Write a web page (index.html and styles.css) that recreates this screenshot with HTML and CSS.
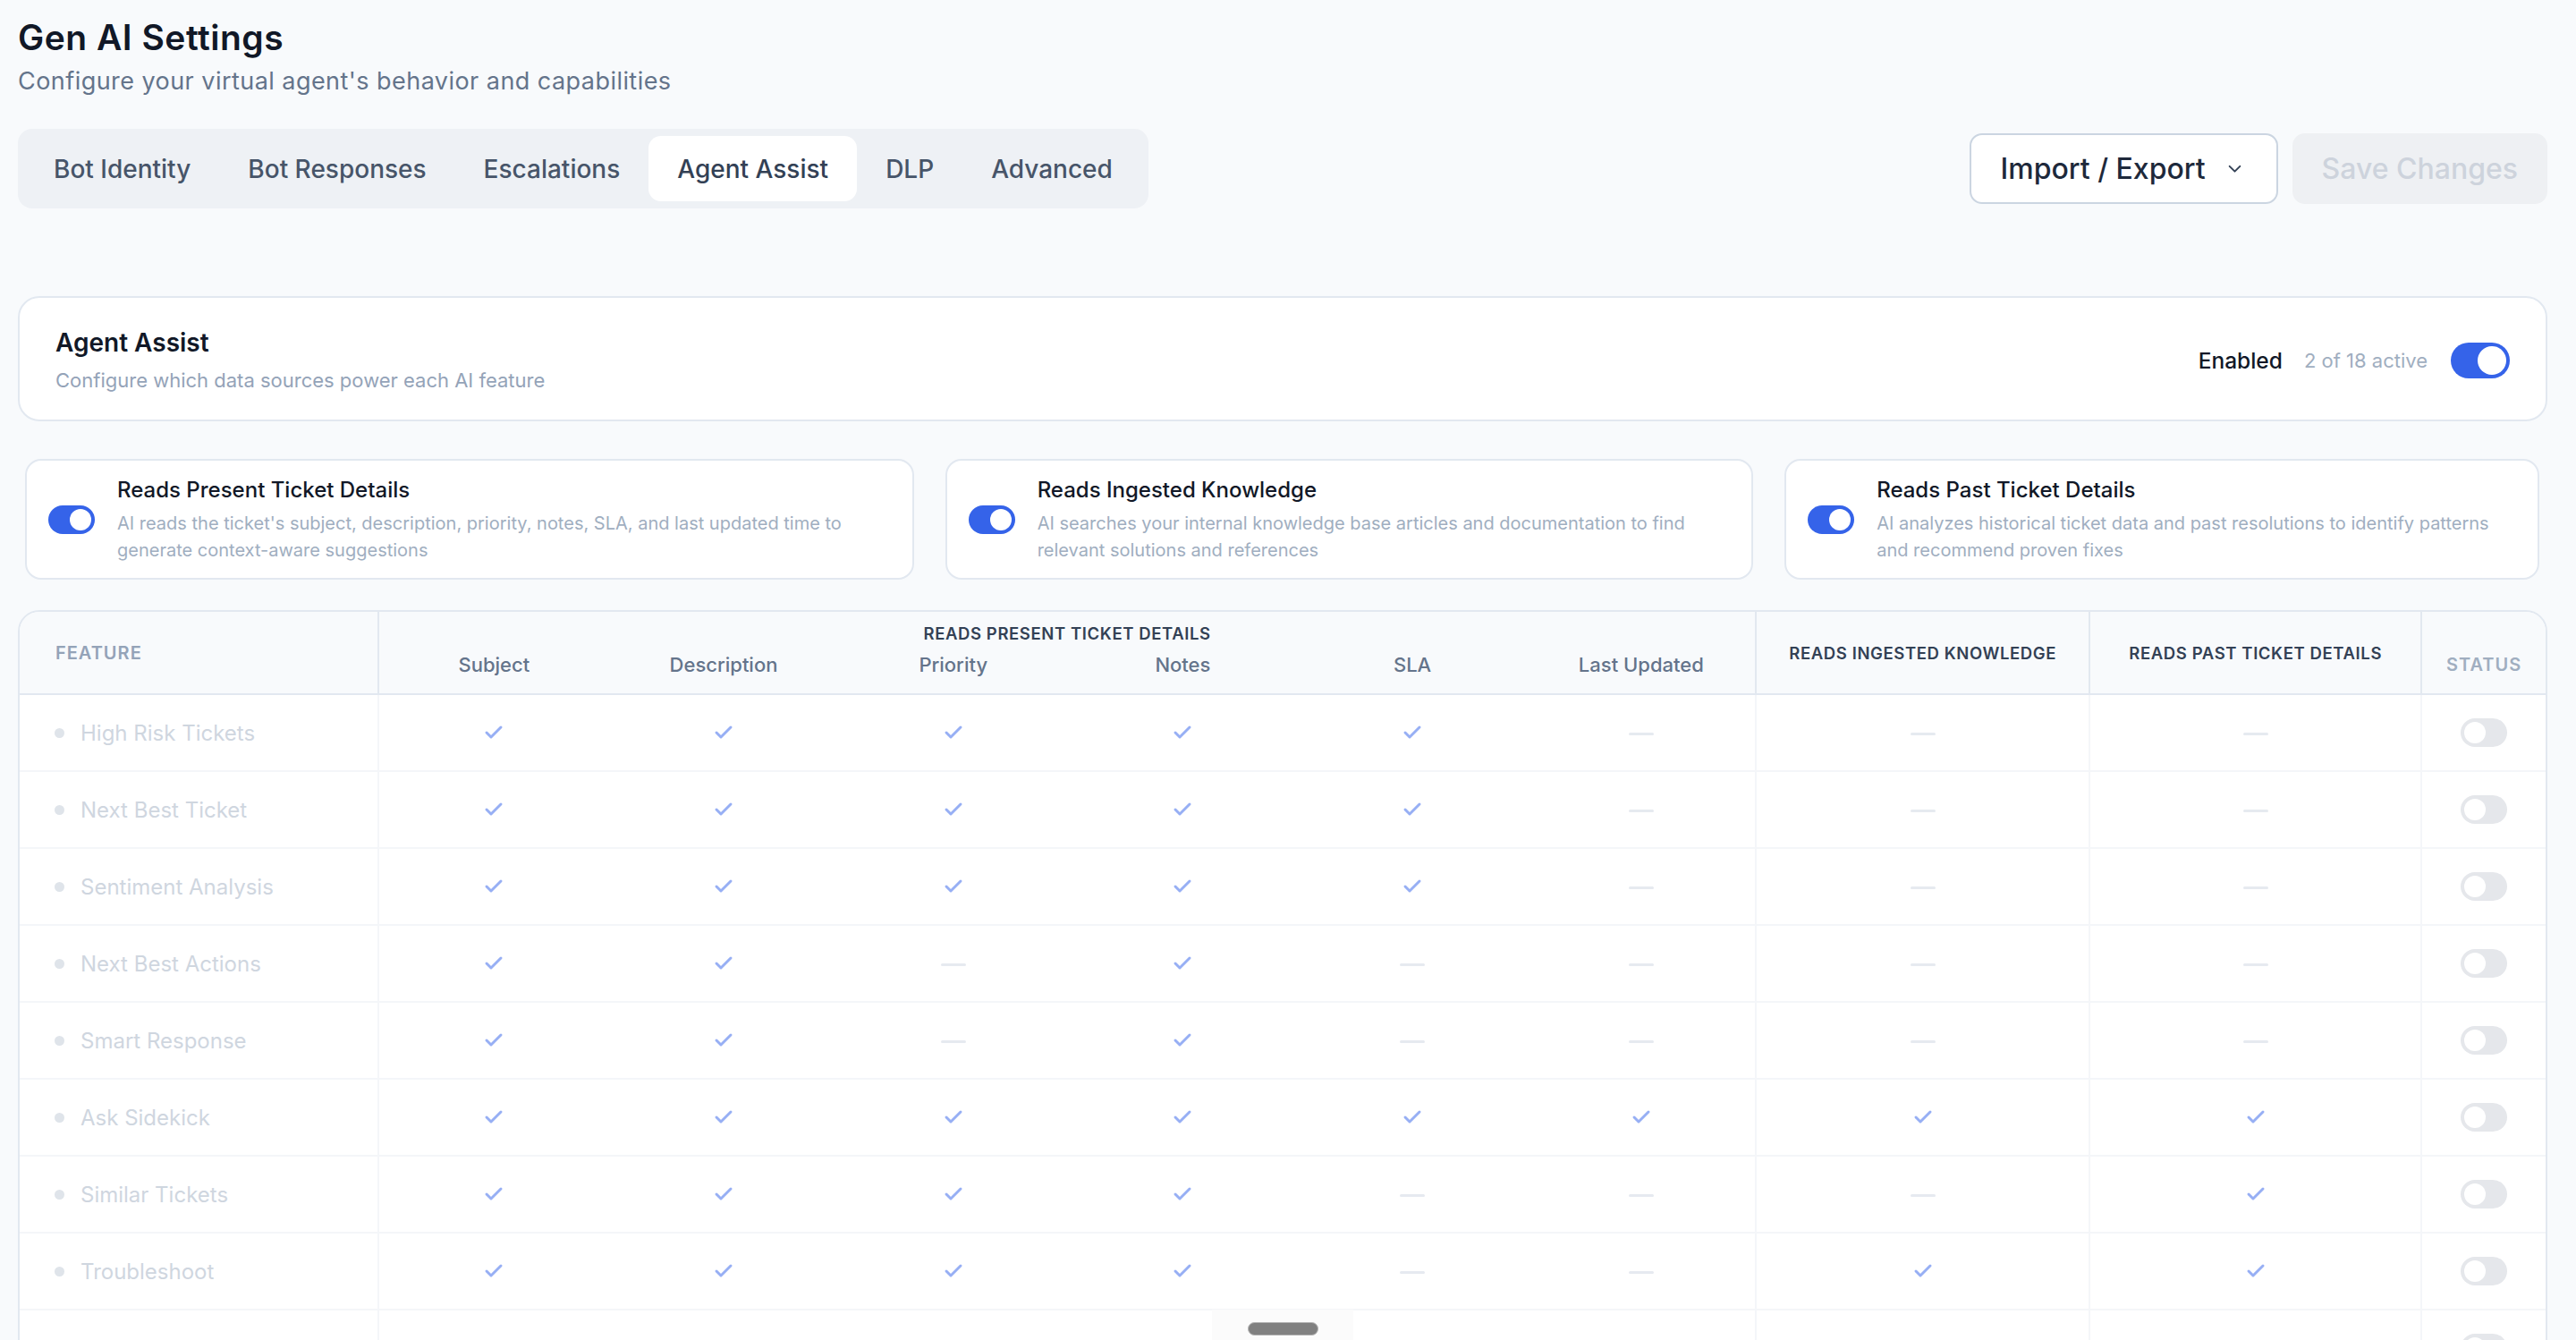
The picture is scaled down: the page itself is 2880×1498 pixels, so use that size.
FILE: index.html
```html
<!DOCTYPE html>
<html lang="en">
<head>
<meta charset="utf-8">
<title>Gen AI Settings</title>
<link rel="stylesheet" href="styles.css">
</head>
<body>
<svg class="defs" width="0" height="0" aria-hidden="true">
  <symbol id="ic-check" viewBox="0 0 24 24">
    <path d="M4 12l5 5L20 6" fill="none" stroke="currentColor" stroke-width="3" stroke-linecap="round" stroke-linejoin="round"/>
  </symbol>
</svg>

<main class="page">
  <header class="page-head">
    <h1 class="page-title">Gen AI Settings</h1>
    <p class="page-subtitle">Configure your virtual agent's behavior and capabilities</p>
  </header>

  <div class="toolbar">
    <nav class="tabs">
      <button class="tab">Bot Identity</button>
      <button class="tab">Bot Responses</button>
      <button class="tab">Escalations</button>
      <button class="tab tab-active">Agent Assist</button>
      <button class="tab">DLP</button>
      <button class="tab">Advanced</button>
    </nav>
    <div class="actions">
      <button class="btn btn-outline">Import / Export
        <svg class="chev" viewBox="0 0 16 16" width="16" height="16"><path d="M2.5 5.5l5.5 5.5 5.5-5.5" fill="none" stroke="currentColor" stroke-width="1.8" stroke-linecap="round" stroke-linejoin="round"/></svg>
      </button>
      <button class="btn btn-disabled" disabled>Save Changes</button>
    </div>
  </div>

  <section class="panel panel-head">
    <div class="panel-text">
      <h2 class="panel-title">Agent Assist</h2>
      <p class="panel-desc">Configure which data sources power each AI feature</p>
    </div>
    <div class="panel-state">
      <span class="state-label">Enabled</span>
      <span class="state-count">2 of 18 active</span>
      <span class="switch switch-lg is-on"></span>
    </div>
  </section>

  <div class="sources">
    <div class="source">
      <span class="switch is-on"></span>
      <div class="source-text">
        <div class="source-title">Reads Present Ticket Details</div>
        <div class="source-desc">AI reads the ticket's subject, description, priority, notes, SLA, and last updated time to generate context-aware suggestions</div>
      </div>
    </div>
    <div class="source">
      <span class="switch is-on"></span>
      <div class="source-text">
        <div class="source-title">Reads Ingested Knowledge</div>
        <div class="source-desc">AI searches your internal knowledge base articles and documentation to find relevant solutions and references</div>
      </div>
    </div>
    <div class="source">
      <span class="switch is-on"></span>
      <div class="source-text">
        <div class="source-title">Reads Past Ticket Details</div>
        <div class="source-desc">AI analyzes historical ticket data and past resolutions to identify patterns and recommend proven fixes</div>
      </div>
    </div>
  </div>

  <div class="matrix">
    <table>
      <colgroup>
        <col class="c-feature">
        <col class="c-sub"><col class="c-sub"><col class="c-sub"><col class="c-sub"><col class="c-sub"><col class="c-sub">
        <col class="c-ingested">
        <col class="c-past">
        <col class="c-status">
      </colgroup>
      <thead>
        <tr class="head-top">
          <th class="h-feature sep" rowspan="2">Feature</th>
          <th class="h-group sep" colspan="6">Reads Present Ticket Details</th>
          <th class="h-group h-mid sep" rowspan="2">Reads Ingested Knowledge</th>
          <th class="h-group h-mid sep" rowspan="2">Reads Past Ticket Details</th>
          <th class="h-status" rowspan="2">Status</th>
        </tr>
        <tr class="head-sub">
          <th>Subject</th>
          <th>Description</th>
          <th>Priority</th>
          <th>Notes</th>
          <th>SLA</th>
          <th class="sep">Last Updated</th>
        </tr>
      </thead>
      <tbody>
        <tr>
          <td class="name sep"><span class="dot"></span>High Risk Tickets</td>
          <td><svg class="chk"><use href="#ic-check"/></svg></td>
          <td><svg class="chk"><use href="#ic-check"/></svg></td>
          <td><svg class="chk"><use href="#ic-check"/></svg></td>
          <td><svg class="chk"><use href="#ic-check"/></svg></td>
          <td><svg class="chk"><use href="#ic-check"/></svg></td>
          <td class="sep"><span class="dash"></span></td>
          <td class="sep"><span class="dash"></span></td>
          <td class="sep"><span class="dash"></span></td>
          <td><span class="switch"></span></td>
        </tr>
        <tr>
          <td class="name sep"><span class="dot"></span>Next Best Ticket</td>
          <td><svg class="chk"><use href="#ic-check"/></svg></td>
          <td><svg class="chk"><use href="#ic-check"/></svg></td>
          <td><svg class="chk"><use href="#ic-check"/></svg></td>
          <td><svg class="chk"><use href="#ic-check"/></svg></td>
          <td><svg class="chk"><use href="#ic-check"/></svg></td>
          <td class="sep"><span class="dash"></span></td>
          <td class="sep"><span class="dash"></span></td>
          <td class="sep"><span class="dash"></span></td>
          <td><span class="switch"></span></td>
        </tr>
        <tr>
          <td class="name sep"><span class="dot"></span>Sentiment Analysis</td>
          <td><svg class="chk"><use href="#ic-check"/></svg></td>
          <td><svg class="chk"><use href="#ic-check"/></svg></td>
          <td><svg class="chk"><use href="#ic-check"/></svg></td>
          <td><svg class="chk"><use href="#ic-check"/></svg></td>
          <td><svg class="chk"><use href="#ic-check"/></svg></td>
          <td class="sep"><span class="dash"></span></td>
          <td class="sep"><span class="dash"></span></td>
          <td class="sep"><span class="dash"></span></td>
          <td><span class="switch"></span></td>
        </tr>
        <tr>
          <td class="name sep"><span class="dot"></span>Next Best Actions</td>
          <td><svg class="chk"><use href="#ic-check"/></svg></td>
          <td><svg class="chk"><use href="#ic-check"/></svg></td>
          <td><span class="dash"></span></td>
          <td><svg class="chk"><use href="#ic-check"/></svg></td>
          <td><span class="dash"></span></td>
          <td class="sep"><span class="dash"></span></td>
          <td class="sep"><span class="dash"></span></td>
          <td class="sep"><span class="dash"></span></td>
          <td><span class="switch"></span></td>
        </tr>
        <tr>
          <td class="name sep"><span class="dot"></span>Smart Response</td>
          <td><svg class="chk"><use href="#ic-check"/></svg></td>
          <td><svg class="chk"><use href="#ic-check"/></svg></td>
          <td><span class="dash"></span></td>
          <td><svg class="chk"><use href="#ic-check"/></svg></td>
          <td><span class="dash"></span></td>
          <td class="sep"><span class="dash"></span></td>
          <td class="sep"><span class="dash"></span></td>
          <td class="sep"><span class="dash"></span></td>
          <td><span class="switch"></span></td>
        </tr>
        <tr>
          <td class="name sep"><span class="dot"></span>Ask Sidekick</td>
          <td><svg class="chk"><use href="#ic-check"/></svg></td>
          <td><svg class="chk"><use href="#ic-check"/></svg></td>
          <td><svg class="chk"><use href="#ic-check"/></svg></td>
          <td><svg class="chk"><use href="#ic-check"/></svg></td>
          <td><svg class="chk"><use href="#ic-check"/></svg></td>
          <td class="sep"><svg class="chk"><use href="#ic-check"/></svg></td>
          <td class="sep"><svg class="chk"><use href="#ic-check"/></svg></td>
          <td class="sep"><svg class="chk"><use href="#ic-check"/></svg></td>
          <td><span class="switch"></span></td>
        </tr>
        <tr>
          <td class="name sep"><span class="dot"></span>Similar Tickets</td>
          <td><svg class="chk"><use href="#ic-check"/></svg></td>
          <td><svg class="chk"><use href="#ic-check"/></svg></td>
          <td><svg class="chk"><use href="#ic-check"/></svg></td>
          <td><svg class="chk"><use href="#ic-check"/></svg></td>
          <td><span class="dash"></span></td>
          <td class="sep"><span class="dash"></span></td>
          <td class="sep"><span class="dash"></span></td>
          <td class="sep"><svg class="chk"><use href="#ic-check"/></svg></td>
          <td><span class="switch"></span></td>
        </tr>
        <tr>
          <td class="name sep"><span class="dot"></span>Troubleshoot</td>
          <td><svg class="chk"><use href="#ic-check"/></svg></td>
          <td><svg class="chk"><use href="#ic-check"/></svg></td>
          <td><svg class="chk"><use href="#ic-check"/></svg></td>
          <td><svg class="chk"><use href="#ic-check"/></svg></td>
          <td><span class="dash"></span></td>
          <td class="sep"><span class="dash"></span></td>
          <td class="sep"><svg class="chk"><use href="#ic-check"/></svg></td>
          <td class="sep"><svg class="chk"><use href="#ic-check"/></svg></td>
          <td><span class="switch"></span></td>
        </tr>
        <tr>
          <td class="name sep"><span class="dot"></span>Case Summary</td>
          <td><svg class="chk"><use href="#ic-check"/></svg></td>
          <td><svg class="chk"><use href="#ic-check"/></svg></td>
          <td><svg class="chk"><use href="#ic-check"/></svg></td>
          <td><svg class="chk"><use href="#ic-check"/></svg></td>
          <td><span class="dash"></span></td>
          <td class="sep"><span class="dash"></span></td>
          <td class="sep"><span class="dash"></span></td>
          <td class="sep"><span class="dash"></span></td>
          <td><span class="switch"></span></td>
        </tr>
      </tbody>
    </table>
  </div>
</main>

<div class="scroll-handle"><span class="scroll-thumb"></span></div>
</body>
</html>
```

FILE: styles.css
```css
* { box-sizing: border-box; }

html, body { margin: 0; }

body {
  background: #f8fafc;
  font-family: Inter, "Noto Sans", "Liberation Sans", sans-serif;
  color: #111827;
  overflow: hidden;
}

.defs { position: absolute; }

.page { padding: 20px 32px 0 20px; }

/* Heading */
.page-title {
  margin: 0;
  font-size: 39px;
  line-height: 44px;
  font-weight: 600;
  letter-spacing: 0.5px;
  color: #111827;
}
.page-subtitle {
  margin: 9px 0 0;
  font-size: 27px;
  line-height: 36px;
  letter-spacing: 0.45px;
  color: #64748b;
}

/* Tabs + actions */
.toolbar {
  margin-top: 35px;
  display: flex;
  align-items: center;
  justify-content: space-between;
}
.tabs {
  display: flex;
  padding: 8px;
  background: #eef1f5;
  border-radius: 16px;
}
.tab {
  font-family: inherit;
  font-size: 28px;
  font-weight: 500;
  height: 73px;
  padding: 0 32px;
  border: 0;
  background: none;
  color: #475569;
  border-radius: 14px;
}
.tab-active {
  background: #fff;
  color: #334155;
}
.actions { display: flex; gap: 16px; }
.btn {
  font-family: inherit;
  font-size: 32px;
  font-weight: 500;
  height: 79px;
  padding: 0 31px;
  border-radius: 14px;
}
.btn-outline {
  display: flex;
  align-items: center;
  gap: 24px;
  padding: 0 38px 0 33px;
  background: #fff;
  border: 2px solid #cbd5e1;
  color: #1e293b;
}
.chev { width: 17px; height: 17px; color: #334155; }
.btn-disabled {
  background: #eef0f3;
  border: 2px solid #eef0f3;
  color: #cdd3dc;
}

/* Switches */
.switch {
  position: relative;
  flex: none;
  display: inline-block;
  width: 52px;
  height: 32px;
  border-radius: 16px;
  background: #e5e7eb;
  vertical-align: middle;
}
.switch::after {
  content: "";
  position: absolute;
  top: 4px;
  left: 4px;
  width: 24px;
  height: 24px;
  border-radius: 50%;
  background: #fff;
}
.switch.is-on { background: #3563e9; }
.switch.is-on::after { left: 24px; }
.switch-lg { width: 66px; height: 40px; border-radius: 20px; }
.switch-lg::after { top: 4px; left: 4px; width: 32px; height: 32px; }
.switch-lg.is-on::after { left: 30px; }

/* Agent Assist header panel */
.panel {
  background: #fff;
  border: 2px solid #e2e8f0;
  border-radius: 24px;
}
.panel-head {
  margin-top: 98px;
  display: flex;
  align-items: center;
  justify-content: space-between;
  padding: 32px 40px 29px;
}
.panel-title {
  margin: 0;
  font-size: 28px;
  line-height: 36px;
  font-weight: 600;
  color: #111827;
}
.panel-desc {
  margin: 9px 0 0;
  font-size: 22px;
  line-height: 30px;
  color: #94a3b8;
}
.panel-state {
  display: flex;
  align-items: center;
}
.state-label { font-size: 24.5px; font-weight: 500; color: #111827; }
.state-count { margin: 0 26px 0 24px; font-size: 22px; color: #a0aec0; }

/* Data source cards */
.sources {
  margin-top: 42px;
  padding: 0 9px 0 8px;
  display: flex;
  gap: 35px;
}
.source {
  flex: 1 1 auto;
  display: flex;
  align-items: center;
  gap: 25px;
  padding: 17px 24px 16px;
  background: #fff;
  border: 2px solid #e2e8f0;
  border-radius: 18px;
}
.source-text { flex: 1 1 auto; min-width: 0; }
.source-title {
  font-size: 24px;
  line-height: 32px;
  font-weight: 500;
  color: #111827;
}
.source-desc {
  margin-top: 6px;
  font-size: 20px;
  line-height: 30px;
  color: #a0aec0;
}

/* Feature matrix */
.matrix {
  margin-top: 34px;
  background: #fff;
  border: 2px solid #e2e8f0;
  border-radius: 24px;
  overflow: hidden;
}
.matrix table {
  width: 100%;
  border-collapse: separate;
  border-spacing: 0;
  table-layout: fixed;
}
.c-feature { width: 402px; }
.c-sub { width: 256.7px; }
.c-ingested { width: 373px; }
.c-past { width: 371px; }

.matrix thead th {
  background: #f8fafc;
  padding: 0;
  text-align: center;
}
.matrix thead th.sep { border-right: 2px solid #e2e8f0; }
.matrix thead tr:last-child th,
.matrix thead th[rowspan] { border-bottom: 2px solid #e2e8f0; }

.h-feature {
  text-align: left !important;
  padding-left: 40px !important;
  font-size: 20px;
  font-weight: 600;
  letter-spacing: 1px;
  text-transform: uppercase;
  color: #94a3b8;
  vertical-align: middle;
}
.h-group {
  padding-top: 12px !important;
  font-size: 18.5px;
  line-height: 24px;
  font-weight: 600;
  letter-spacing: 0.6px;
  text-transform: uppercase;
  color: #334155;
}
.h-mid { padding-top: 0 !important; vertical-align: middle; }
.h-status {
  vertical-align: bottom;
  padding-bottom: 17px !important;
  font-size: 20px;
  line-height: 30px;
  font-weight: 600;
  letter-spacing: 1px;
  text-transform: uppercase;
  color: #a0aec0;
}
.head-sub th {
  padding: 8px 0 17px !important;
  font-size: 22px;
  line-height: 30px;
  font-weight: 500;
  color: #64748b;
}

.matrix tbody td {
  height: 86px;
  padding: 0;
  text-align: center;
  vertical-align: middle;
  border-bottom: 2px solid #f4f6f9;
}
.matrix tbody td.sep { border-right: 2px solid #f4f6f9; }
.matrix tbody td.name {
  text-align: left;
  padding-left: 39px;
  font-size: 24px;
  color: #cfd6df;
}
.dot {
  display: inline-block;
  width: 11px;
  height: 11px;
  margin-right: 18px;
  border-radius: 50%;
  background: #dfe4ea;
  vertical-align: 3px;
}
.chk {
  display: inline-block;
  width: 24px;
  height: 24px;
  color: #97aff4;
  vertical-align: middle;
}
.dash {
  display: inline-block;
  width: 28px;
  height: 3px;
  border-radius: 2px;
  background: #e6eaf0;
  vertical-align: middle;
}

/* Horizontal scroll affordance pinned at the bottom edge */
.scroll-handle {
  position: fixed;
  left: 1355px;
  bottom: 0;
  width: 158px;
  height: 34px;
  background: #fbfbfb;
}
.scroll-thumb {
  position: absolute;
  left: 40px;
  top: 14px;
  width: 79px;
  height: 15px;
  border-radius: 8px;
  background: #808080;
  border: 1px solid #b5b5b5;
}
```
